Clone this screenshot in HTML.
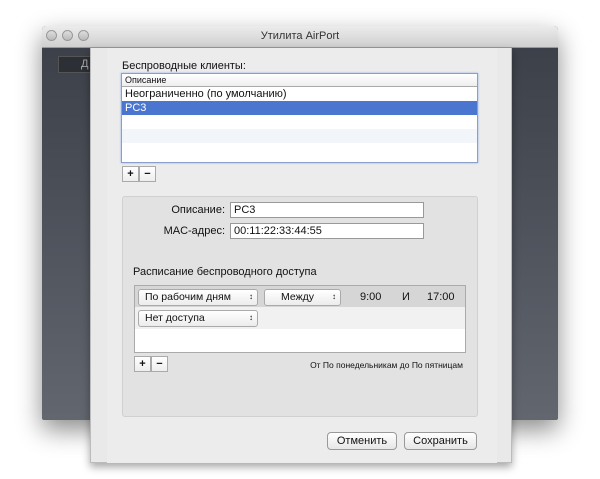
<!DOCTYPE html>
<html><head><meta charset="utf-8"><style>
*{box-sizing:border-box}
body{margin:0;width:600px;height:479px;background:#fff;position:relative;overflow:hidden;font-family:"Liberation Sans","DejaVu Sans",sans-serif;font-size:11px;color:#111}
.a{position:absolute}
.win{left:42px;top:26px;width:516px;height:394px;background:linear-gradient(#3a3e47,#62666f);box-shadow:0 10px 25px rgba(0,0,0,.45);border-radius:4px 4px 2px 2px}
.tb{left:42px;top:26px;width:516px;height:22px;background:linear-gradient(#ececec,#cfcfcf);border-radius:4px 4px 0 0;border-bottom:1px solid #999;text-align:center;line-height:21px;font-size:11px;color:#333}
.dot{top:30px;width:11px;height:11px;border-radius:50%;border:1px solid #999;background:linear-gradient(#ddd,#bbb)}
.sheet{left:90px;top:48px;width:422px;height:415px;background:#e9e9e9;box-shadow:0 4px 8px rgba(0,0,0,.35);border:1px solid #bbb;border-top:none}
.inner{left:107px;top:48px;width:390px;height:415px;background:#ececec}
.inp{background:#fff;border:1px solid #999;padding-left:3px;line-height:14px;font-size:11px}
.pop{background:linear-gradient(#fff,#ececec);border:1px solid #aaa;border-radius:3px;font-size:10.5px;line-height:14px;padding-left:6px}
.pop:after{content:"\2195";position:absolute;right:4px;top:0;font-size:8px}
.btn{background:linear-gradient(#fff,#e6e6e6);border:1px solid #999;border-radius:4px;text-align:center;font-size:11px;line-height:16px}
.pm{background:linear-gradient(#fff,#eee);border:1px solid #aaa;text-align:center;font-size:11px;line-height:14px;font-weight:bold;width:17px;height:16px}
</style></head><body>
<div class="a win"></div>
<div class="a tb">Утилита AirPort</div>
<div class="a dot" style="left:46px"></div><div class="a dot" style="left:62px"></div><div class="a dot" style="left:78px"></div>
<div class="a" style="left:58px;top:56px;width:40px;height:17px;background:#2c2f36;border:1px solid #555;color:#aaa;font-size:11px;line-height:15px;padding-left:22px">Д</div>
<div class="a sheet"></div>
<div class="a inner"></div>
<div class="a" style="left:122px;top:60px;font-size:11px">Беспроводные клиенты:</div>
<div class="a" style="left:121px;top:73px;width:357px;height:90px;background:#fff;border:1px solid #8aa0c8;box-shadow:0 0 2px #8fb0e8"></div>
<div class="a" style="left:122px;top:74px;width:355px;height:13px;background:linear-gradient(#fff,#eee);border-bottom:1px solid #aaa;font-size:9px;line-height:12px;padding-left:3px">Описание</div>
<div class="a" style="left:125px;top:88px;font-size:11px">Неограниченно (по умолчанию)</div>
<div class="a" style="left:122px;top:101px;width:355px;height:14px;background:#4a76d0;color:#fff;font-size:11px;line-height:14px;padding-left:3px">PC3</div>
<div class="a" style="left:122px;top:129px;width:355px;height:14px;background:#f2f5fa"></div>
<div class="a pm" style="left:122px;top:166px">+</div><div class="a pm" style="left:139px;top:166px">−</div>
<div class="a" style="left:122px;top:196px;width:356px;height:221px;background:#e2e2e2;border:1px solid #d0d0d0;border-radius:3px"></div>
<div class="a" style="left:150px;top:204px;width:75px;text-align:right">Описание:</div>
<div class="a inp" style="left:230px;top:202px;width:194px;height:16px">PC3</div>
<div class="a" style="left:150px;top:225px;width:75px;text-align:right">MAC-адрес:</div>
<div class="a inp" style="left:230px;top:223px;width:194px;height:16px">00:11:22:33:44:55</div>
<div class="a" style="left:133px;top:266px">Расписание беспроводного доступа</div>
<div class="a" style="left:134px;top:285px;width:332px;height:68px;background:#fff;border:1px solid #aaa"></div>
<div class="a" style="left:135px;top:286px;width:330px;height:21px;background:#d6d6d6"></div>
<div class="a" style="left:135px;top:307px;width:330px;height:22px;background:#f1f1f1"></div>
<div class="a pop" style="left:138px;top:289px;width:120px;height:17px">По рабочим дням</div>
<div class="a pop" style="left:264px;top:289px;width:77px;height:17px;padding-left:16px">Между</div>
<div class="a" style="left:360px;top:291px;font-size:11px">9:00</div>
<div class="a" style="left:402px;top:291px;font-size:11px">И</div>
<div class="a" style="left:427px;top:291px;font-size:11px">17:00</div>
<div class="a pop" style="left:138px;top:310px;width:120px;height:17px">Нет доступа</div>
<div class="a pm" style="left:134px;top:356px">+</div><div class="a pm" style="left:151px;top:356px">−</div>
<div class="a" style="left:290px;top:360px;width:173px;text-align:right;font-size:8.5px">От По понедельникам до По пятницам</div>
<div class="a btn" style="left:327px;top:432px;width:70px;height:18px">Отменить</div>
<div class="a btn" style="left:404px;top:432px;width:73px;height:18px">Сохранить</div>
</body></html>
